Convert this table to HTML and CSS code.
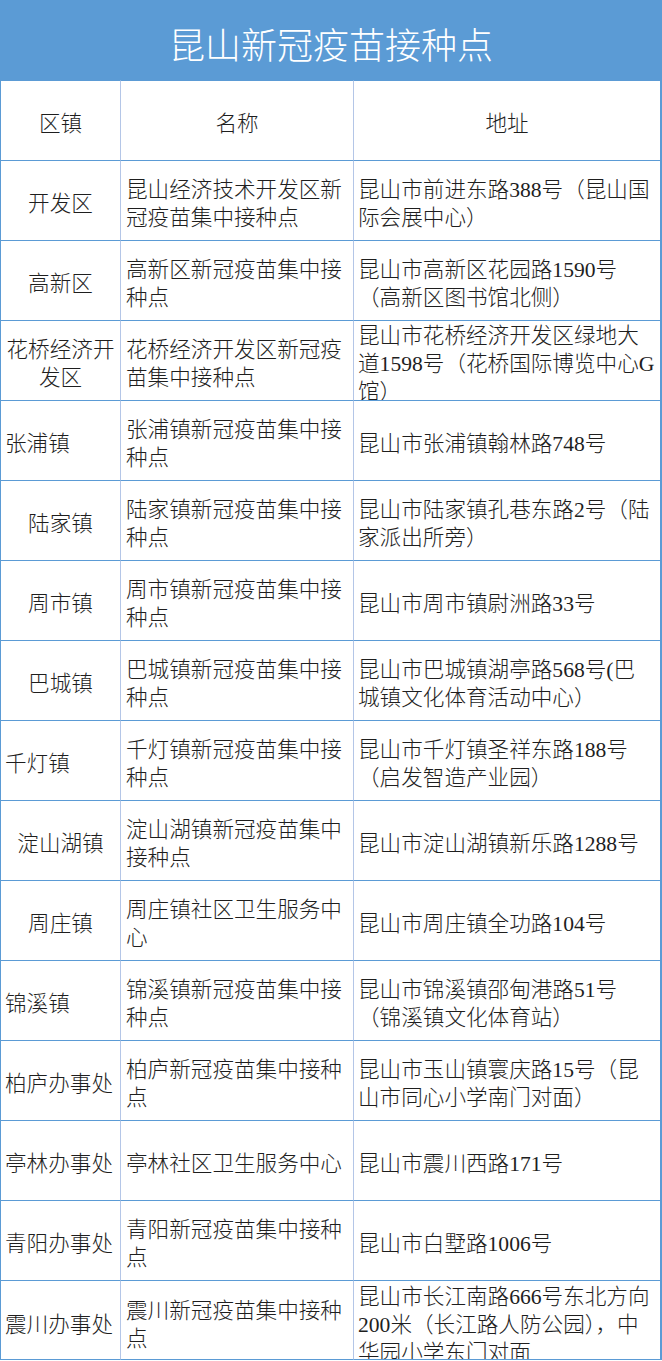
FILE: index.html
```html
<!DOCTYPE html>
<html lang="zh-CN">
<head>
<meta charset="utf-8">
<title>昆山新冠疫苗接种点</title>
<link rel="stylesheet" href="styles.css">
</head>
<body>
<div class="page">
  <h1 class="title">昆山新冠疫苗接种点</h1>
  <div class="sheet">
    <div class="cell c1 ctr">区镇</div>
    <div class="cell c2 ctr">名称</div>
    <div class="cell c3 ctr">地址</div>

    <div class="cell c1 ctr">开发区</div>
    <div class="cell c2">昆山经济技术开发区新<br>冠疫苗集中接种点</div>
    <div class="cell c3">昆山市前进东路388号（昆山国<br>际会展中心）</div>

    <div class="cell c1 ctr">高新区</div>
    <div class="cell c2">高新区新冠疫苗集中接<br>种点</div>
    <div class="cell c3">昆山市高新区花园路1590号<br>（高新区图书馆北侧）</div>

    <div class="cell c1 ctr">花桥经济开<br>发区</div>
    <div class="cell c2">花桥经济开发区新冠疫<br>苗集中接种点</div>
    <div class="cell c3">昆山市花桥经济开发区绿地大<br>道1598号（花桥国际博览中心G<br>馆）</div>

    <div class="cell c1">张浦镇</div>
    <div class="cell c2">张浦镇新冠疫苗集中接<br>种点</div>
    <div class="cell c3">昆山市张浦镇翰林路748号</div>

    <div class="cell c1 ctr">陆家镇</div>
    <div class="cell c2">陆家镇新冠疫苗集中接<br>种点</div>
    <div class="cell c3">昆山市陆家镇孔巷东路2号（陆<br>家派出所旁）</div>

    <div class="cell c1 ctr">周市镇</div>
    <div class="cell c2">周市镇新冠疫苗集中接<br>种点</div>
    <div class="cell c3">昆山市周市镇尉洲路33号</div>

    <div class="cell c1 ctr">巴城镇</div>
    <div class="cell c2">巴城镇新冠疫苗集中接<br>种点</div>
    <div class="cell c3">昆山市巴城镇湖亭路568号(巴<br>城镇文化体育活动中心）</div>

    <div class="cell c1">千灯镇</div>
    <div class="cell c2">千灯镇新冠疫苗集中接<br>种点</div>
    <div class="cell c3">昆山市千灯镇圣祥东路188号<br>（启发智造产业园）</div>

    <div class="cell c1 ctr">淀山湖镇</div>
    <div class="cell c2">淀山湖镇新冠疫苗集中<br>接种点</div>
    <div class="cell c3">昆山市淀山湖镇新乐路1288号</div>

    <div class="cell c1 ctr">周庄镇</div>
    <div class="cell c2">周庄镇社区卫生服务中<br>心</div>
    <div class="cell c3">昆山市周庄镇全功路104号</div>

    <div class="cell c1">锦溪镇</div>
    <div class="cell c2">锦溪镇新冠疫苗集中接<br>种点</div>
    <div class="cell c3">昆山市锦溪镇邵甸港路51号<br>（锦溪镇文化体育站）</div>

    <div class="cell c1">柏庐办事处</div>
    <div class="cell c2">柏庐新冠疫苗集中接种<br>点</div>
    <div class="cell c3">昆山市玉山镇寰庆路15号（昆<br>山市同心小学南门对面）</div>

    <div class="cell c1">亭林办事处</div>
    <div class="cell c2">亭林社区卫生服务中心</div>
    <div class="cell c3">昆山市震川西路171号</div>

    <div class="cell c1">青阳办事处</div>
    <div class="cell c2">青阳新冠疫苗集中接种<br>点</div>
    <div class="cell c3">昆山市白墅路1006号</div>

    <div class="cell c1 last">震川办事处</div>
    <div class="cell c2 last">震川新冠疫苗集中接种<br>点</div>
    <div class="cell c3 last">昆山市长江南路666号东北方向<br>200米（长江路人防公园），中<br>华园小学东门对面</div>
  </div>
</div>
</body>
</html>
```

FILE: styles.css
```css
* {
  box-sizing: border-box;
}

html, body {
  margin: 0;
  padding: 0;
  background: #ffffff;
}

.page {
  width: 662px;
  font-family: "Liberation Serif", "Noto Sans CJK SC", sans-serif;
  font-weight: 300;
  color: #1e1e1e;
}

.title {
  margin: 0;
  height: 80px;
  background: #5b9bd5;
  color: #ffffff;
  font-family: "Noto Sans CJK SC", sans-serif;
  font-weight: 300;
  font-size: 36px;
  text-align: center;
  padding-top: 6px;
  line-height: 74px;
}

.sheet {
  display: grid;
  grid-template-columns: 119px 233px 307px;
  grid-auto-rows: 80px;
  border-left: 1px solid #5b9bd5;
  border-right: 2px solid #5b9bd5;
}

.cell {
  display: flex;
  flex-direction: column;
  justify-content: center;
  overflow: hidden;
  border-top: 1px solid #5b9bd5;
  padding: 6px 0 0 0;
  font-size: 21.6px;
  line-height: 28px;
  white-space: nowrap;
}

.cell.last {
  border-bottom: 1px solid #5b9bd5;
  padding-top: 9px;
}

.c1 {
  padding-left: 4px;
}

.c2 {
  border-left: 1px solid #b4c6e7;
  padding-left: 5px;
}

.c3 {
  border-left: 1px solid #b4c6e7;
  padding-left: 4px;
}

.ctr {
  text-align: center;
  padding-left: 0;
}
```
